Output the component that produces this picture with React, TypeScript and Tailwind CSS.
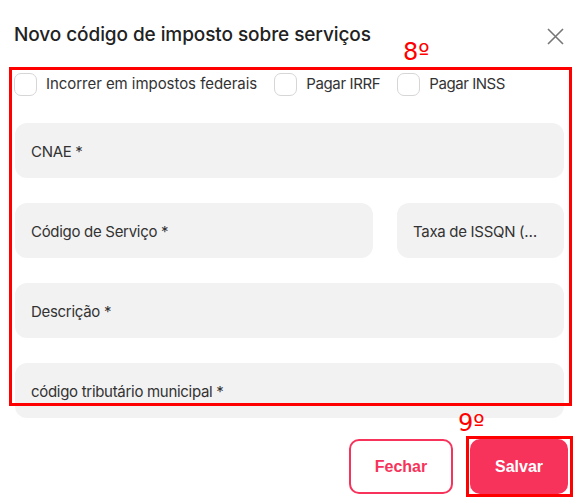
import React from "react";

function Check({ label, track = "tracking-[-0.05px]" }: { label: string; track?: string }) {
  return (
    <div className="flex items-center gap-[9px]">
      <div className="w-[23px] h-[23px] rounded-[7px] border border-[#d6d6d6] bg-white" />
      <span className={"text-[15px] text-[#333] " + track}>{label}</span>
    </div>
  );
}

function Field({ label, className = "" }: { label: string; className?: string }) {
  return (
    <div className={"h-[55px] rounded-[12px] bg-[#f2f2f2] flex items-center pl-[16px] pr-[26px] min-w-0 " + className}>
      <span className="text-[15px] text-[#333] tracking-[-0.3px] truncate pt-[3px]">{label}</span>
    </div>
  );
}

export default function App() {
  return (
    <div
      className="w-[583px] h-[503px] bg-white relative px-[15px] overflow-hidden"
      style={{ fontFamily: "Inter, 'Noto Sans', sans-serif" }}
    >
      <div className="flex items-center justify-between pt-[23px] h-[47px]">
        <h1 className="text-[19px] font-medium text-[#222] tracking-[-0.08px] -ml-[1px]">
          Novo código de imposto sobre serviços
        </h1>
        <svg width="17" height="17" viewBox="0 0 17 17" className="mr-[4px] mt-[2px]">
          <path d="M1 1 L16 16 M16 1 L1 16" stroke="#777" strokeWidth="1.6" />
        </svg>
      </div>

      <div className="relative">
        <div className="flex items-center mt-[26px] -ml-[1px]">
          <Check label="Incorrer em impostos federais" />
          <div className="ml-[17px]"><Check label="Pagar IRRF" track="tracking-[-0.35px]" /></div>
          <div className="ml-[17px]"><Check label="Pagar INSS" track="tracking-[-0.45px]" /></div>
        </div>

        <div className="flex flex-col gap-[25px] mt-[27px] pr-[4px]">
          <Field label="CNAE *" />
          <div className="flex gap-[24px]">
            <Field label="Código de Serviço *" className="w-[358px]" />
            <Field label="Taxa de ISSQN (%) *" className="flex-1" />
          </div>
          <Field label="Descrição *" />
          <Field label="código tributário municipal *" />
        </div>

        <div className="absolute left-[-6px] top-[-6px] w-[563px] h-[339px] border-[3px] border-[#ff0000] pointer-events-none" />
        <span
          className="absolute left-[388px] top-[-33px] text-[24px] leading-none text-[#ff0000]"
          style={{ fontFamily: "'DejaVu Sans', sans-serif" }}
        >
          8º
        </span>
      </div>

      <div className="flex justify-end gap-[17px] mt-[21px] pr-[0px]">
        <button
          className="w-[104px] h-[55px] rounded-[10px] border-2 border-[#f7335c] text-[#f7335c] text-[16px] font-bold bg-white"
          style={{ fontFamily: "'Liberation Sans', Arial, sans-serif" }}
        >
          Fechar
        </button>
        <div className="relative">
          <button
            className="w-[98px] h-[55px] rounded-[10px] bg-[#f7335c] text-white text-[16px] font-bold"
            style={{ fontFamily: "'Liberation Sans', Arial, sans-serif" }}
          >
            Salvar
          </button>
          <div className="absolute left-[-4px] top-[-3px] w-[107px] h-[61px] border-[3px] border-[#ff0000] pointer-events-none" />
          <span
            className="absolute left-[-12px] top-[-28px] text-[24px] leading-none text-[#ff0000]"
            style={{ fontFamily: "'DejaVu Sans', sans-serif" }}
          >
            9º
          </span>
        </div>
      </div>
    </div>
  );
}
